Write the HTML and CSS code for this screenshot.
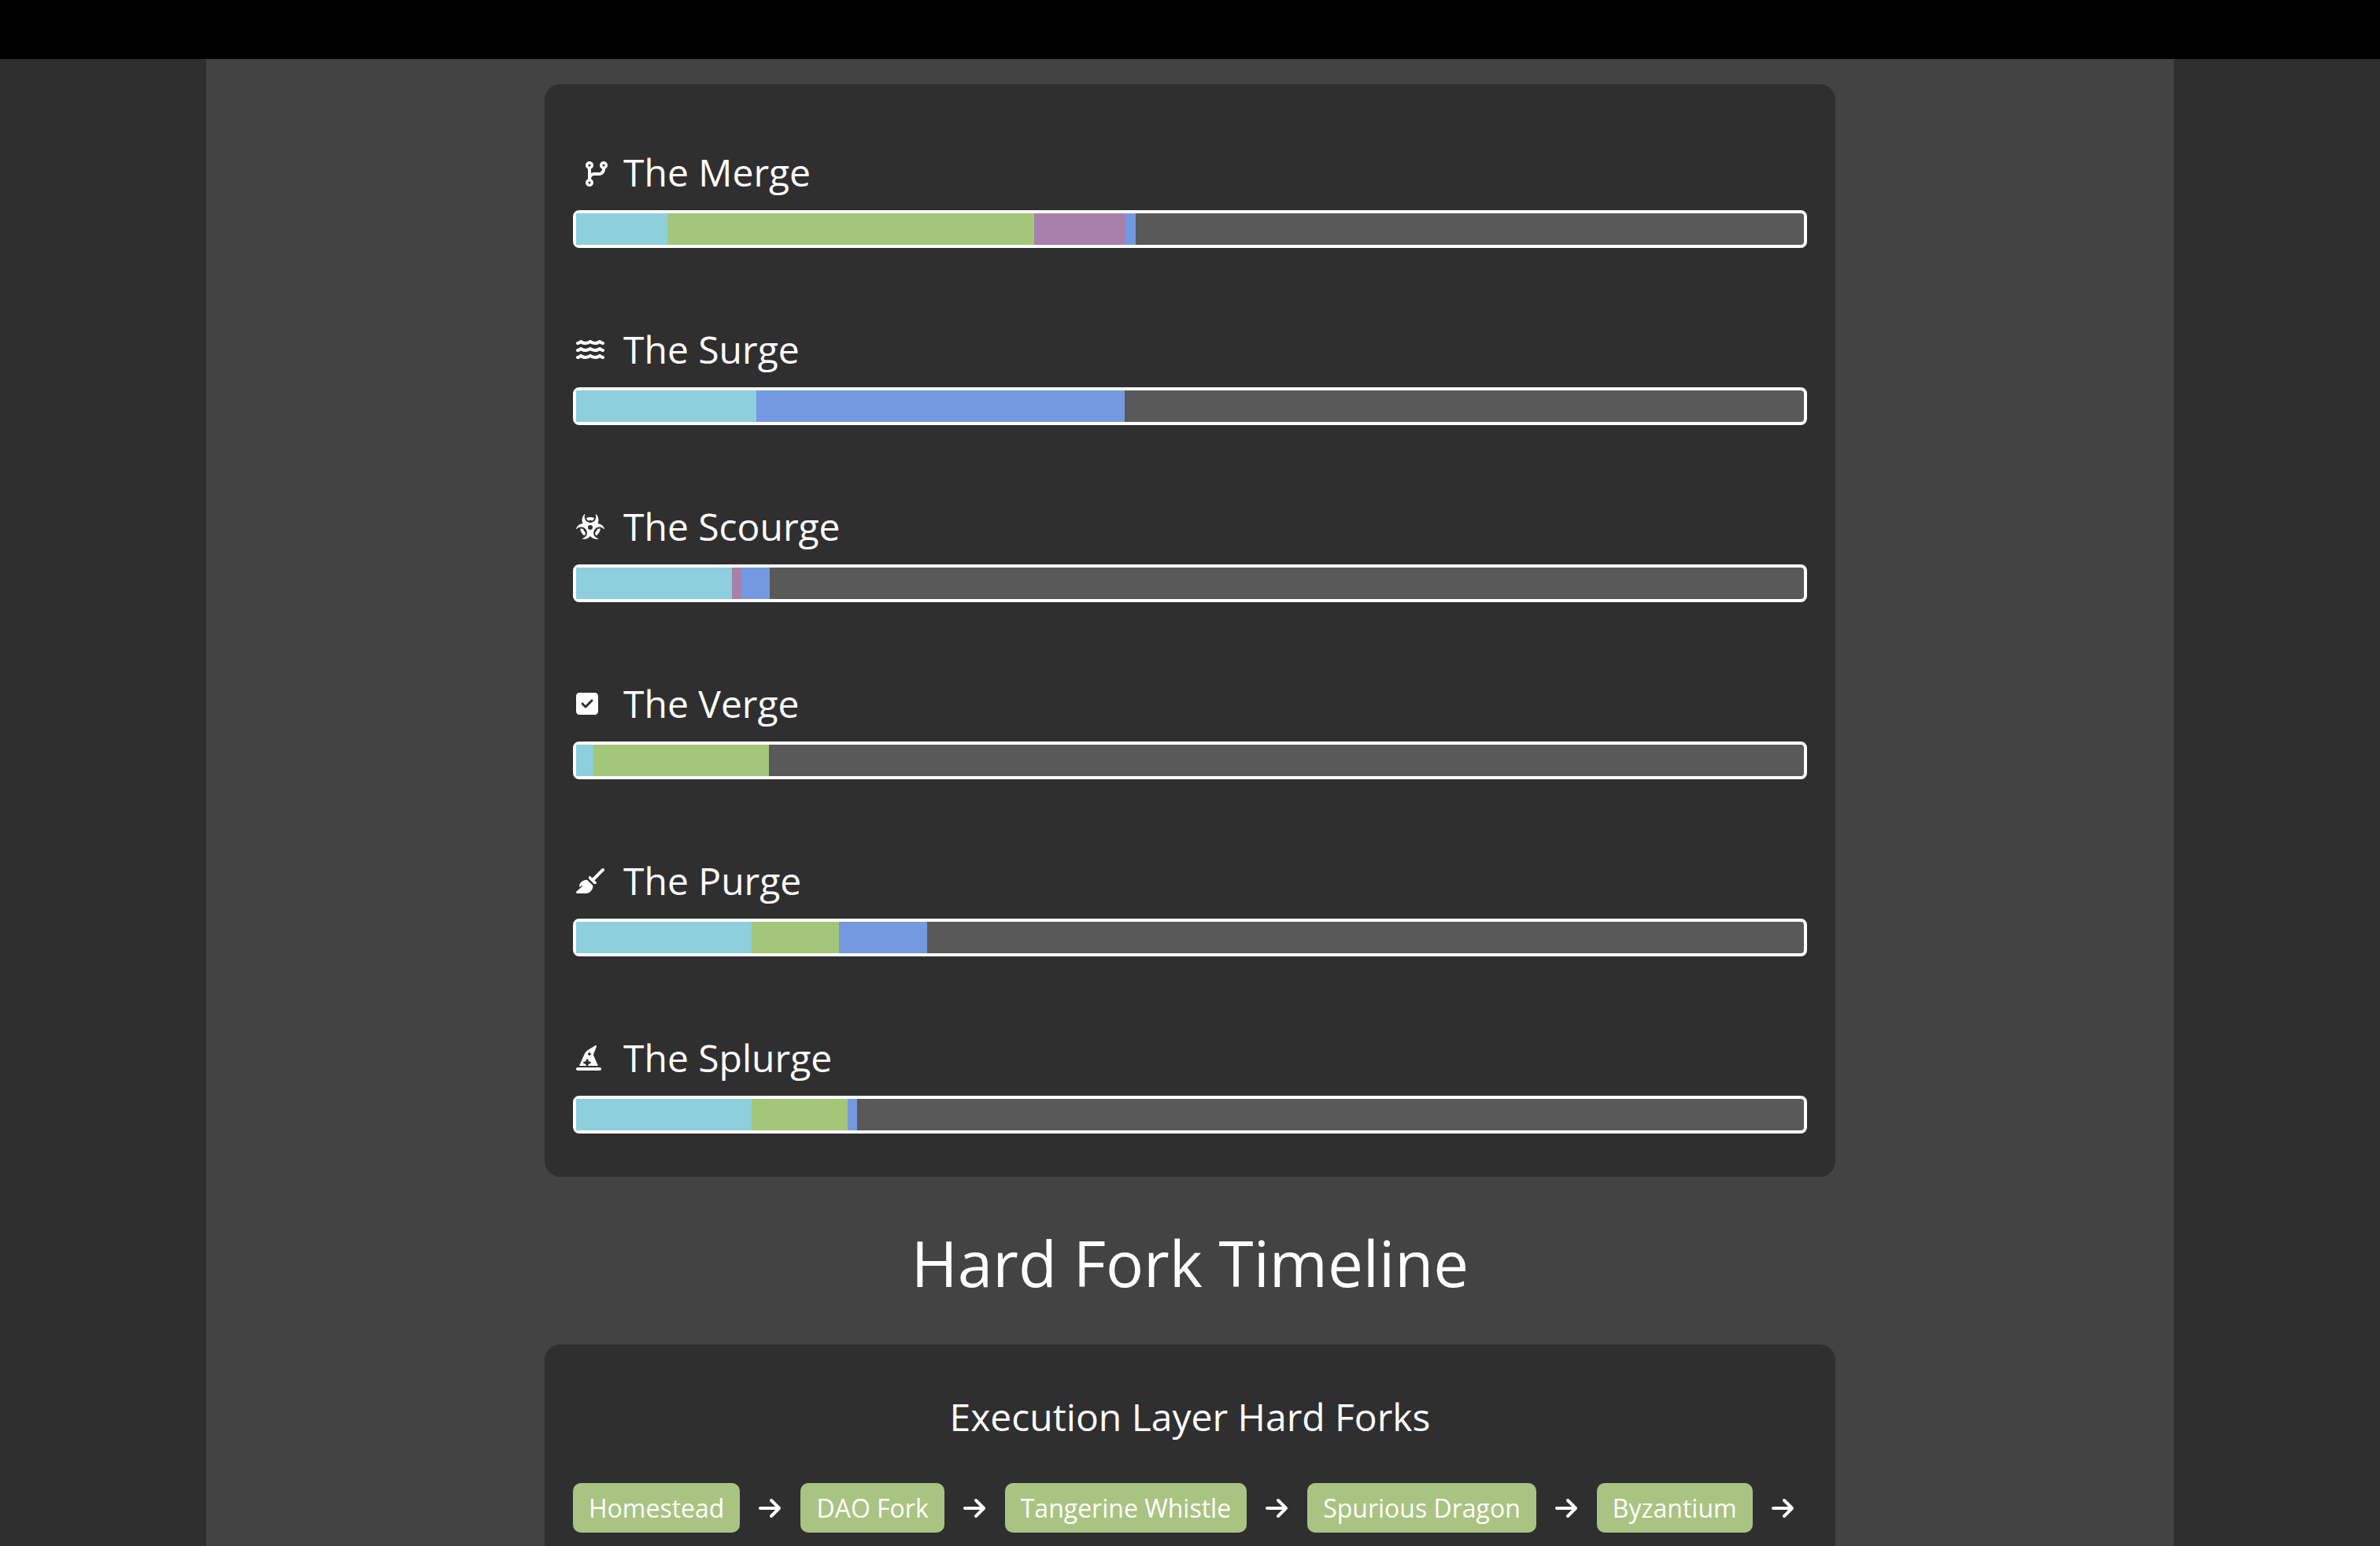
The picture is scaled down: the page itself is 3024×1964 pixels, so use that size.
FILE: index.html
```html
<!DOCTYPE html>
<html lang="en">
<head>
<meta charset="utf-8">
<meta name="viewport" content="width=device-width, initial-scale=1">
<title>Ethereum Roadmap</title>
<link rel="stylesheet" href="styles.css">
</head>
<body>
<header class="topbar"></header>
<main class="page">
  <section class="card phases">
    <article class="phase">
      <h3 class="phase-title">
        <svg class="icon" viewBox="-192 -80 640 592" aria-hidden="true"><path d="M80 104a24 24 0 1 0 0-48 24 24 0 1 0 0 48zm80-24c0 32.8-19.7 61-48 73.3l0 87.8c18.8-10.9 40.7-17.1 64-17.1l96 0c35.3 0 64-28.7 64-64l0-6.7C307.7 141 288 112.8 288 80c0-44.2 35.8-80 80-80s80 35.8 80 80c0 32.8-19.7 61-48 73.3l0 6.7c0 70.7-57.3 128-128 128l-96 0c-35.3 0-64 28.7-64 64l0 6.7c28.3 12.3 48 40.5 48 73.3c0 44.2-35.8 80-80 80s-80-35.8-80-80c0-32.8 19.7-61 48-73.3l0-6.7 0-198.7C19.7 141 0 112.8 0 80C0 35.8 35.8 0 80 0s80 35.8 80 80zm232 0a24 24 0 1 0 -48 0 24 24 0 1 0 48 0zM80 456a24 24 0 1 0 0-48 24 24 0 1 0 0 48z"/></svg>
        The Merge
      </h3>
      <div class="bar">
        <span class="seg cyan" style="width:7.44%"></span><span class="seg green" style="width:29.87%"></span><span class="seg purple" style="width:7.44%"></span><span class="seg blue" style="width:0.83%"></span>
      </div>
    </article>
    <article class="phase">
      <h3 class="phase-title">
        <svg class="icon" viewBox="0 -48 640 592" aria-hidden="true"><path id="wave" d="M269.5 69.9c11.1-7.9 25.9-7.9 37 0C329 85.4 356.5 96 384 96c26.9 0 55.4-10.8 77.4-26.1l0 0c11.9-8.5 28.1-7.8 39.2 1.7c14.4 11.9 32.5 21 50.6 25.2c17.2 4 27.9 21.2 23.9 38.4s-21.2 27.9-38.4 23.9c-24.5-5.7-44.9-16.5-58.2-25C449.5 149.7 417 160 384 160c-31.9 0-60.6-9.9-80.4-18.9c-5.8-2.7-11.1-5.3-15.6-7.7c-4.5 2.4-9.7 5.1-15.6 7.7c-19.8 9-48.5 18.9-80.4 18.9c-33 0-65.5-10.3-94.5-25.8c-13.4 8.4-33.7 19.3-58.2 25c-17.2 4-34.4-6.7-38.4-23.9s6.7-34.4 23.9-38.4C42.8 92.6 61 83.5 75.3 71.6c11.1-9.5 27.3-10.1 39.2-1.7l0 0C136.7 85.2 165.1 96 192 96c27.5 0 55-10.6 77.5-26.1z"/><use href="#wave" y="144"/><use href="#wave" y="288"/></svg>
        The Surge
      </h3>
      <div class="bar">
        <span class="seg cyan" style="width:14.68%"></span><span class="seg blue" style="width:30%"></span>
      </div>
    </article>
    <article class="phase">
      <h3 class="phase-title">
        <svg class="icon" viewBox="0 -48 640 592" aria-hidden="true"><path d="M173.2 0c-1.8 0-3.5 .7-4.8 2C138.5 32.3 120 74 120 120c0 26.2 6 50.9 16.6 73c-22 2.4-43.8 9.1-64.2 20.5C37.9 232.8 13.3 262.4 .4 296c-.7 1.7-.5 3.7 .5 5.2c2.2 3.7 7.4 4.3 10.6 1.3C64.2 254.3 158 245.1 205 324s-8.1 153.1-77.6 173.2c-4.2 1.2-6.3 5.9-4.1 9.6c1 1.6 2.6 2.7 4.5 3c36.5 5.9 75.2 .1 109.7-19.2c20.4-11.4 37.4-26.5 50.5-43.8c13.1 17.3 30.1 32.4 50.5 43.8c34.5 19.3 73.3 25.2 109.7 19.2c1.9-.3 3.5-1.4 4.5-3c2.2-3.7 .1-8.4-4.1-9.6C379.1 477.1 324 403 371 324s140.7-69.8 193.5-21.4c3.2 2.9 8.4 2.3 10.6-1.3c1-1.6 1.1-3.5 .5-5.2c-12.9-33.6-37.5-63.2-72.1-82.5c-20.4-11.4-42.2-18.1-64.2-20.5C450 170.9 456 146.2 456 120c0-46-18.5-87.7-48.4-118c-1.3-1.3-3-2-4.8-2c-5 0-8.4 5.2-6.7 9.9C421.7 80.5 385.6 176 288 176S154.3 80.5 179.9 9.9c1.7-4.7-1.6-9.9-6.7-9.9zM240 272a48 48 0 1 1 96 0 48 48 0 1 1 -96 0zM181.7 417.6c6.3-11.8 9.8-25.1 8.6-39.8c-19.5-18-34-41.4-41.2-67.8c-12.5-8.1-26.2-11.8-40-12.4c-9-.4-18.1 .6-27.1 2.7c7.8 57.1 38.7 106.8 82.9 139.4c6.8-6.7 12.6-14.1 16.8-22.1zM288 64c-28.8 0-56.3 5.9-81.2 16.5c2 8.3 5 16.2 9 23.5c6.8 12.4 16.7 23.1 30.1 30.3c13.3-4.1 27.5-6.3 42.2-6.3s28.8 2.2 42.2 6.3c13.4-7.2 23.3-17.9 30.1-30.3c4-7.3 7-15.2 9-23.5C344.3 69.9 316.8 64 288 64zM426.9 310c-7.2 26.4-21.7 49.7-41.2 67.8c-1.2 14.7 2.2 28.1 8.6 39.8c4.3 8 10 15.4 16.8 22.1c44.3-32.6 75.2-82.3 82.9-139.4c-9-2.2-18.1-3.1-27.1-2.7c-13.8 .6-27.5 4.4-40 12.4z"/></svg>
        The Scourge
      </h3>
      <div class="bar">
        <span class="seg cyan" style="width:12.69%"></span><span class="seg purple" style="width:0.77%"></span><span class="seg blue" style="width:2.31%"></span>
      </div>
    </article>
    <article class="phase">
      <h3 class="phase-title">
        <svg class="icon" viewBox="0 -48 640 592" aria-hidden="true"><path d="M64 32C28.7 32 0 60.7 0 96V416c0 35.3 28.7 64 64 64H384c35.3 0 64-28.7 64-64V96c0-35.3-28.7-64-64-64H64zM337 209L209 337c-9.4 9.4-24.6 9.4-33.9 0l-64-64c-9.4-9.4-9.4-24.6 0-33.9s24.6-9.4 33.9 0l47 47L303 175c9.4-9.4 24.6-9.4 33.9 0s9.4 24.6 0 33.9z"/></svg>
        The Verge
      </h3>
      <div class="bar">
        <span class="seg cyan" style="width:1.41%"></span><span class="seg green" style="width:14.29%"></span>
      </div>
    </article>
    <article class="phase">
      <h3 class="phase-title">
        <svg class="icon" viewBox="0 -48 640 592" aria-hidden="true"><path d="M566.6 54.6c12.5-12.5 12.5-32.8 0-45.3s-32.8-12.5-45.3 0l-192 192-34.7-34.7c-4.2-4.2-10-6.6-16-6.6c-12.5 0-22.6 10.1-22.6 22.6l0 29.1L364.3 320l29.1 0c12.5 0 22.6-10.1 22.6-22.6c0-6-2.4-11.8-6.6-16l-34.7-34.7 192-192zM341.1 353.4L222.6 234.9c-42.7-3.7-85.2 11.7-115.8 42.3l-8 8C76.5 307.5 64 337.7 64 369.2c0 6.8 7.1 11.2 13.2 8.2l51.1-25.5c5-2.5 9.5 4.1 5.4 7.9L7.3 473.4C2.7 477.6 0 483.6 0 489.9C0 502.1 9.9 512 22.1 512l173.3 0c38.8 0 75.9-15.4 103.4-42.8c30.6-30.6 45.9-73.1 42.3-115.8z"/></svg>
        The Purge
      </h3>
      <div class="bar">
        <span class="seg cyan" style="width:14.29%"></span><span class="seg green" style="width:7.14%"></span><span class="seg blue" style="width:7.14%"></span>
      </div>
    </article>
    <article class="phase">
      <h3 class="phase-title">
        <svg class="icon" viewBox="0 -48 640 592" aria-hidden="true"><path d="M64 416L168.6 180.7c15.3-34.4 40.3-63.5 72-83.7l146.9-94c3-1.9 6.5-2.9 10-2.9C407.7 0 416 8.3 416 18.6v1.6c0 2.6-.5 5.1-1.4 7.5L354.8 176.9c-1.9 4.7-2.8 9.7-2.8 14.7c0 5.5 1.2 11 3.4 16.1L448 416H240.9l11.8-35.4 40.4-13.5c6.5-2.2 10.9-8.3 10.9-15.2s-4.4-13-10.9-15.2l-40.4-13.5-13.5-40.4C237 276.4 230.9 272 224 272s-13 4.4-15.2 10.9l-13.5 40.4-40.4 13.5C148.4 339 144 345.1 144 352s4.4 13 10.9 15.2l40.4 13.5L207.1 416H64zM279.6 141.5c-1.1-3.3-4.1-5.5-7.6-5.5s-6.5 2.2-7.6 5.5l-6.7 20.2-20.2 6.7c-3.3 1.1-5.5 4.1-5.5 7.6s2.2 6.5 5.5 7.6l20.2 6.7 6.7 20.2c1.1 3.3 4.1 5.5 7.6 5.5s6.5-2.2 7.6-5.5l6.7-20.2 20.2-6.7c3.3-1.1 5.5-4.1 5.5-7.6s-2.2-6.5-5.5-7.6l-20.2-6.7-6.7-20.2zM32 448H480c17.7 0 32 14.3 32 32s-14.3 32-32 32H32c-17.7 0-32-14.3-32-32s14.3-32 32-32z"/></svg>
        The Splurge
      </h3>
      <div class="bar">
        <span class="seg cyan" style="width:14.29%"></span><span class="seg green" style="width:7.82%"></span><span class="seg blue" style="width:0.77%"></span>
      </div>
    </article>
  </section>

  <h2 class="section-title">Hard Fork Timeline</h2>

  <section class="card timeline">
    <h3 class="timeline-title">Execution Layer Hard Forks</h3>
    <ol class="forks">
      <li class="fork"><button class="chip" type="button">Homestead</button><svg class="arrow" viewBox="0 0 448 512" aria-hidden="true"><path id="arrow" d="M438.6 278.6c12.5-12.5 12.5-32.8 0-45.3l-160-160c-12.5-12.5-32.8-12.5-45.3 0s-12.5 32.8 0 45.3L338.8 224 32 224c-17.7 0-32 14.3-32 32s14.3 32 32 32l306.7 0L233.4 393.4c-12.5 12.5-12.5 32.8 0 45.3s32.8 12.5 45.3 0l160-160z"/></svg></li>
      <li class="fork"><button class="chip" type="button">DAO Fork</button><svg class="arrow" viewBox="0 0 448 512" aria-hidden="true"><use href="#arrow"/></svg></li>
      <li class="fork"><button class="chip" type="button">Tangerine Whistle</button><svg class="arrow" viewBox="0 0 448 512" aria-hidden="true"><use href="#arrow"/></svg></li>
      <li class="fork"><button class="chip" type="button">Spurious Dragon</button><svg class="arrow" viewBox="0 0 448 512" aria-hidden="true"><use href="#arrow"/></svg></li>
      <li class="fork"><button class="chip" type="button">Byzantium</button><svg class="arrow" viewBox="0 0 448 512" aria-hidden="true"><use href="#arrow"/></svg></li>
    </ol>
  </section>
</main>
</body>
</html>
```
FILE: styles.css
```css
* {
  box-sizing: border-box;
}

body {
  display: flex;
  flex-direction: column;
  min-height: 100vh;
  margin: 0;
  background: #2f2f2f;
  color: #fff;
  font-family: "Open Sans", "Noto Sans", sans-serif;
}

h2,
h3 {
  margin: 0;
  font-weight: 400;
}

svg {
  flex: none;
  fill: currentColor;
}

.topbar {
  height: 75px;
  background: #000;
}

.page {
  flex: 1;
  display: flex;
  flex-direction: column;
  align-items: center;
  width: 100%;
  max-width: 2500px;
  margin: 0 auto;
  padding-top: 32px;
  background: #434343;
}

.card {
  width: 100%;
  max-width: 1640px;
  padding: 0 36px;
  border-radius: 20px;
  background: #2f2f2f;
}

.phases {
  display: flex;
  flex-direction: column;
  gap: 96px;
  padding-top: 79px;
  padding-bottom: 55px;
}

.phase {
  display: flex;
  flex-direction: column;
  gap: 16px;
}

.phase-title {
  display: flex;
  align-items: center;
  gap: 20px;
  padding-left: 4px;
  font-size: 48px;
  line-height: 65px;
}

.icon {
  width: 40px;
  height: 37px;
}

.bar {
  display: flex;
  height: 48px;
  border: 4px solid #fff;
  border-radius: 8px;
  background: #595959;
}

.cyan { background: #8dcfdc; }
.green { background: #a3c679; }
.purple { background: #a781ac; }
.blue { background: #7499e0; }

.section-title {
  margin: 54px 0 50px;
  font-size: 80px;
  line-height: 109px;
  text-align: center;
}

.timeline {
  flex: 1;
  padding-top: 59px;
  border-radius: 20px 20px 0 0;
}

.timeline-title {
  font-size: 48px;
  line-height: 65px;
  text-align: center;
}

.forks {
  display: flex;
  flex-wrap: wrap;
  gap: 25px;
  margin: 52px 0 0;
  padding: 0;
  list-style: none;
}

.fork {
  display: flex;
  align-items: center;
  gap: 24px;
}

.chip {
  padding: 10px 20px;
  border: 0;
  border-radius: 10px;
  background: #a9c482;
  color: #fff;
  font-family: inherit;
  font-size: 32px;
  line-height: 43px;
}

.arrow {
  width: 28px;
  height: 32px;
}
```
